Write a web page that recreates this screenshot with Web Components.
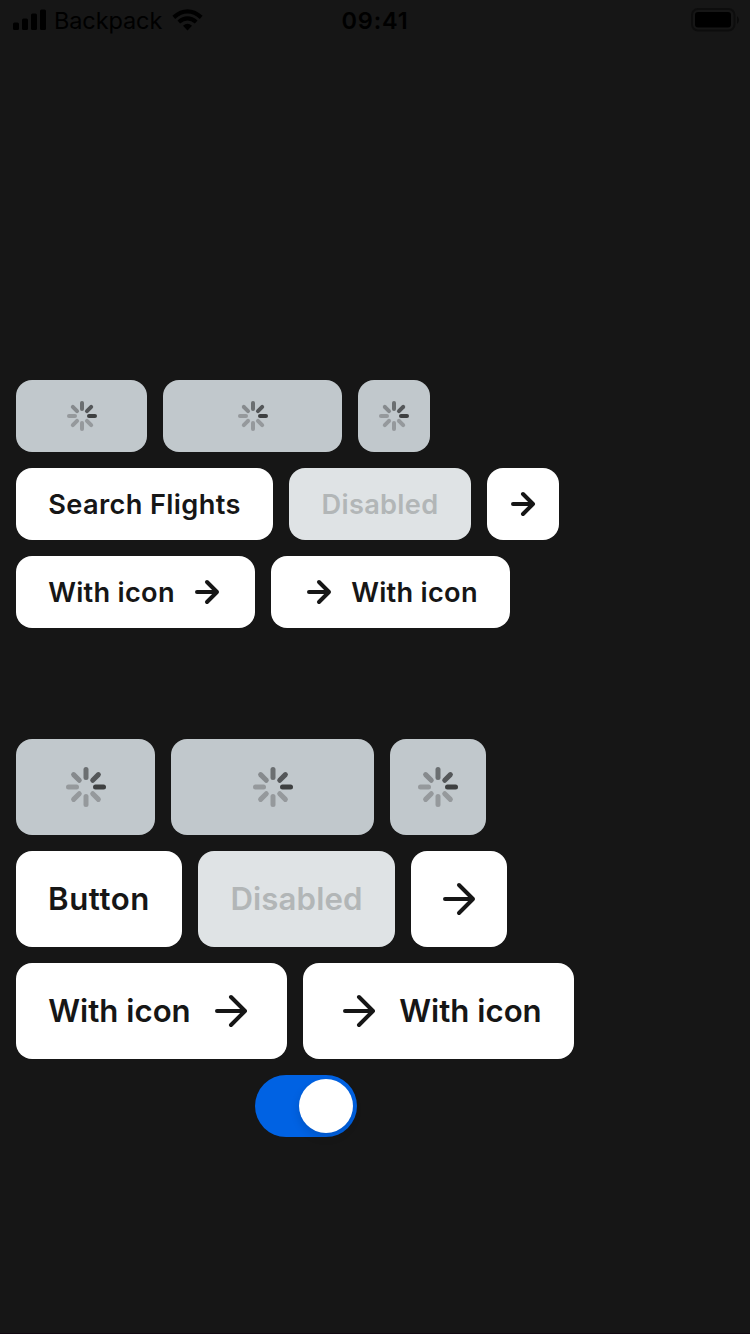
<!DOCTYPE html>
<html lang="en">
<head>
<meta charset="utf-8">
<title>Buttons</title>
<style>
html, body { margin: 0; height: 100%; background: #161616; }
body { font-family: Inter, "Liberation Sans", sans-serif; overflow: hidden; }
</style>
</head>
<body>
<demo-screen></demo-screen>
<script>
const define = (name, html) => customElements.define(name, class extends HTMLElement {
  constructor() {
    super();
    const t = document.createElement('template');
    t.innerHTML = html;
    this.attachShadow({ mode: 'open' }).append(t.content.cloneNode(true));
  }
});

define('status-bar', `<style>
:host { display: grid; grid-template-columns: 1fr auto 1fr; align-items: center; height: 40px; box-sizing: border-box; padding: 0 10px; color: #000; }
.left { display: flex; align-items: center; padding-left: 3px; }
svg { display: block; }
.carrier { font-size: 23.5px; letter-spacing: -.1px; margin: 1px 0 0 7px; width: 111px; white-space: nowrap; }
.time { font-size: 23.5px; font-weight: 600; letter-spacing: .8px; margin-top: 1px; }
.battery { justify-self: end; }
</style>
<div class="left">
<svg width="34" height="22" viewBox="0 0 34 22"><rect y="13.500" width="6" height="7.500" rx="1.500"/><rect x="9" y="9.500" width="6" height="11.500" rx="1.500"/><rect x="18" y="4.500" width="6" height="16.500" rx="1.500"/><rect x="27" y=".5" width="6" height="20.500" rx="1.500"/></svg>
<span class="carrier">Backpack</span>
<svg width="32" height="24" viewBox="0 0 32 24" style="margin-left:7px"><g fill="none" stroke="#000" stroke-width="4.200"><path d="M1.800 9.300Q15.500 -2.500 29.200 9.300"/><path d="M6.800 14Q15.500 6.700 24.200 14"/></g><path d="M11 17.700Q15.500 14 20 17.700L15.500 22.500Z"/></svg>
</div>
<span class="time">09:41</span>
<svg class="battery" width="49" height="24" viewBox="0 0 49 24"><rect x="1" y="1" width="42.500" height="21.500" rx="6" fill="none" stroke="#0d0d0d" stroke-width="2"/><rect x="4" y="4" width="36" height="15.500" rx="3" fill="#000"/><path d="M46 8Q50 12 46 16Z" fill="#0b0b0b"/></svg>`);

define('button-row', `<style>:host { display: flex; gap: 16px; }</style><slot></slot>`);

const arrows = {
  small: '<svg width="32" height="32" viewBox="0 0 32 32"><path d="M6 16H26M16 6L26 16L16 26"/></svg>',
  large: '<svg width="48" height="48" viewBox="0 0 48 48"><path d="M10 24H38M24 10L38 24L24 38"/></svg>'
};
const spinner = large => {
  const r = large ? [9.5, 17.5, 5, 40] : [7, 13, 4, 30];
  const shades = ['#3e4041', '#95999c', '#95999c', '#95999c', '#95999c', '#868a8d', '#6b6f71', '#545759'];
  return `<svg width="${r[3]}" height="${r[3]}" viewBox="${-r[3] / 2} ${-r[3] / 2} ${r[3]} ${r[3]}">` +
    shades.map((c, i) => `<path d="M${r[0]} 0H${r[1]}" transform="rotate(${i * 45})" style="stroke:${c};stroke-width:${r[2]}"/>`).join('') + '</svg>';
};
customElements.define('bpk-button', class extends HTMLElement {
  connectedCallback() {
    const large = this.hasAttribute('large');
    const icon = this.getAttribute('icon');
    const loading = this.hasAttribute('loading');
    const arrow = arrows[large ? 'large' : 'small'];
    const label = '<span><slot></slot></span>';
    const content = loading ? spinner(large) : icon === 'only' ? arrow :
      icon === 'start' ? arrow + label : icon === 'end' ? label + arrow : label;
    this.attachShadow({ mode: 'open' }).innerHTML = `<style>
:host { display: flex; box-sizing: border-box; align-items: center; justify-content: center; gap: 16px;
  width: ${this.getAttribute('width')}px; height: ${large ? 96 : 72}px; padding: 0 ${icon === 'only' ? 0 : 32}px; border-radius: 16px;
  background: #fff; color: #161616; font-weight: 600; font-size: ${large ? 31.2 : 27.2}px; white-space: nowrap; }
:host([disabled]) { background: #dfe3e5; color: #b2b6b7; }
:host([loading]) { background: #c1c8cc; padding: 0 0 0 1px; }
:host([loading][icon]) { padding: 0; }
span { flex: 1; text-align: center; letter-spacing: ${this.getAttribute('tracking') || 0}px; }
svg { display: block; flex: none; fill: none; stroke: currentColor; stroke-width: 4; stroke-linecap: round; stroke-linejoin: round; }
</style>${content}`;
  }
});

define('toggle-switch', `<style>
:host { display: flex; box-sizing: border-box; justify-content: flex-end; width: 102px; height: 62px; padding: 4px; border-radius: 31px; background: #0062e3; }
i { width: 54px; height: 54px; border-radius: 50%; background: #fff; box-shadow: 0 4px 10px #0002; }
</style><i></i>`);

define('demo-screen', `<style>
:host { display: flex; flex-direction: column; height: 1334px; box-sizing: border-box; border-bottom: 1px solid #100810; }
main { display: flex; flex-direction: column; gap: 16px; padding: 340px 16px 0; }
.second { margin-top: 95px; }
toggle-switch { margin-left: 239px; }
</style>
<status-bar></status-bar>
<main>
<button-row><bpk-button loading width="131"></bpk-button><bpk-button loading width="179"></bpk-button><bpk-button loading icon="only" width="72"></bpk-button></button-row>
<button-row><bpk-button width="257" tracking=".36">Search Flights</bpk-button><bpk-button disabled width="182" tracking=".3">Disabled</bpk-button><bpk-button icon="only" width="72"></bpk-button></button-row>
<button-row><bpk-button icon="end" width="239" tracking=".28">With icon</bpk-button><bpk-button icon="start" width="239" tracking=".28">With icon</bpk-button></button-row>
<button-row class="second"><bpk-button large loading width="139"></bpk-button><bpk-button large loading width="203"></bpk-button><bpk-button large loading icon="only" width="96"></bpk-button></button-row>
<button-row><bpk-button large width="166" tracking=".6">Button</bpk-button><bpk-button large disabled width="197" tracking=".1">Disabled</bpk-button><bpk-button large icon="only" width="96"></bpk-button></button-row>
<button-row><bpk-button large icon="end" width="271" tracking="0">With icon</bpk-button><bpk-button large icon="start" width="271" tracking="0">With icon</bpk-button></button-row>
<toggle-switch></toggle-switch>
</main>`);
</script>
</body>
</html>
